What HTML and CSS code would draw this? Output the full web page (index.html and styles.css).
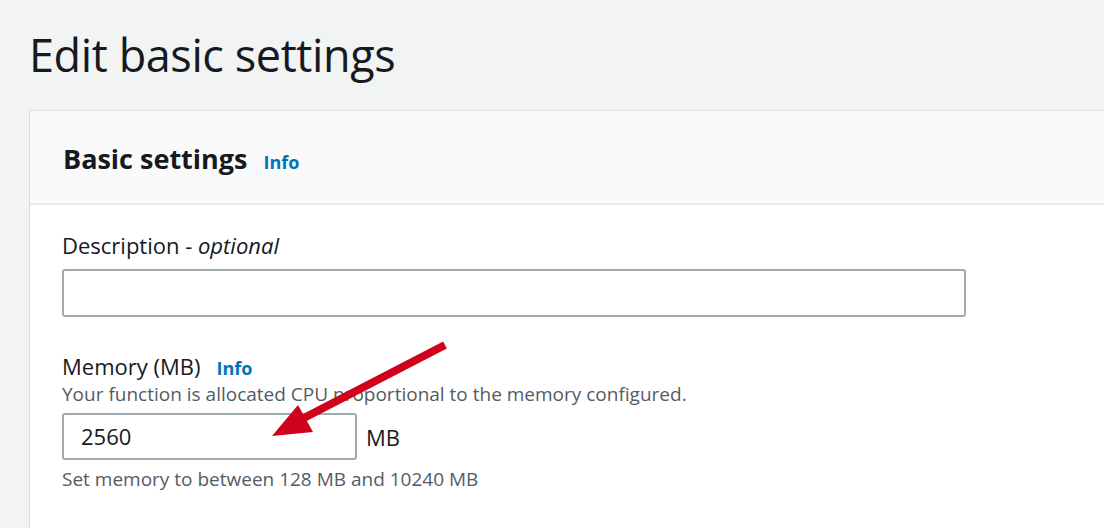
FILE: index.html
```html
<!DOCTYPE html>
<html>
<head>
<meta charset="utf-8">
<link rel="stylesheet" href="styles.css">
</head>
<body>
<div class="page">
  <h1 class="title">Edit basic settings</h1>
  <section class="card">
    <header class="card-header">
      <h2 class="card-title">Basic settings</h2>
      <a class="info info-lg">Info</a>
    </header>
    <div class="card-body">
      <div class="field">
        <label class="label">Description - <i>optional</i></label>
        <div class="input input-wide"></div>
      </div>
      <div class="field field-memory">
        <div class="label-row">
          <label class="label">Memory (MB)</label>
          <a class="info">Info</a>
        </div>
        <div class="hint">Your function is allocated CPU proportional to the memory configured.</div>
        <div class="input-row">
          <div class="input input-narrow">2560</div>
          <span class="unit">MB</span>
        </div>
        <div class="constraint">Set memory to between 128 MB and 10240 MB</div>
      </div>
    </div>
  </section>
  <svg class="arrow" width="1104" height="528" viewBox="0 0 1104 528">
    <line x1="445" y1="345" x2="300" y2="420" stroke="#d0021b" stroke-width="8" />
    <polygon points="272,436 298,405 313,432" fill="#d0021b" />
  </svg>
</div>
</body>
</html>
```

FILE: styles.css
```css
html, body {
  margin: 0;
  padding: 0;
  background: #f2f3f3;
}
body {
  font-family: "Open Sans", "Noto Sans", sans-serif;
  color: #16191f;
  width: 1104px;
  height: 528px;
  overflow: hidden;
}
.page {
  position: relative;
  padding-top: 24px;
  padding-left: 29px;
}
.title {
  margin: 0;
  font-size: 45px;
  font-weight: 400;
  line-height: 62px;
  letter-spacing: -0.4px;
}
.card {
  margin-top: 24px;
  background: #fff;
  border-top: 1px solid #dfe3e3;
  border-left: 1px solid #d5dbdb;
  height: 420px;
}
.card-header {
  display: flex;
  align-items: baseline;
  gap: 16px;
  background: #fafafa;
  border-bottom: 2px solid #e9ebeb;
  height: 94px;
  box-sizing: border-box;
  padding: 28px 0 0 33px;
}
.card-title {
  margin: 0;
  font-size: 27px;
  font-weight: 700;
  line-height: 40px;
}
.info {
  color: #0073bb;
  font-weight: 700;
  font-size: 18px;
}
.card-body {
  padding: 24px 0 0 32px;
}
.label {
  font-size: 22px;
  line-height: 32px;
  display: block;
}
.label i {
  font-style: italic;
}
.input {
  box-sizing: border-box;
  border: 2px solid #a0acac;
  border-radius: 3px;
  background: #fff;
}
.input-wide {
  margin-top: 8px;
  width: 904px;
  height: 48px;
}
.field-memory {
  margin-top: 33px;
}
.label-row {
  display: flex;
  align-items: baseline;
  gap: 16px;
}
.hint {
  font-size: 19px;
  line-height: 24px;
  color: #545b64;
}
.input-row {
  display: flex;
  align-items: center;
  gap: 9px;
  margin-top: 7px;
}
.input-narrow {
  width: 295px;
  height: 47px;
  font-size: 22px;
  line-height: 43px;
  padding-left: 17px;
}
.unit {
  font-size: 22px;
}
.constraint {
  margin-top: 6px;
  font-size: 19px;
  line-height: 26px;
  color: #545b64;
}
.arrow {
  position: absolute;
  left: 0;
  top: 0;
  pointer-events: none;
}
```
